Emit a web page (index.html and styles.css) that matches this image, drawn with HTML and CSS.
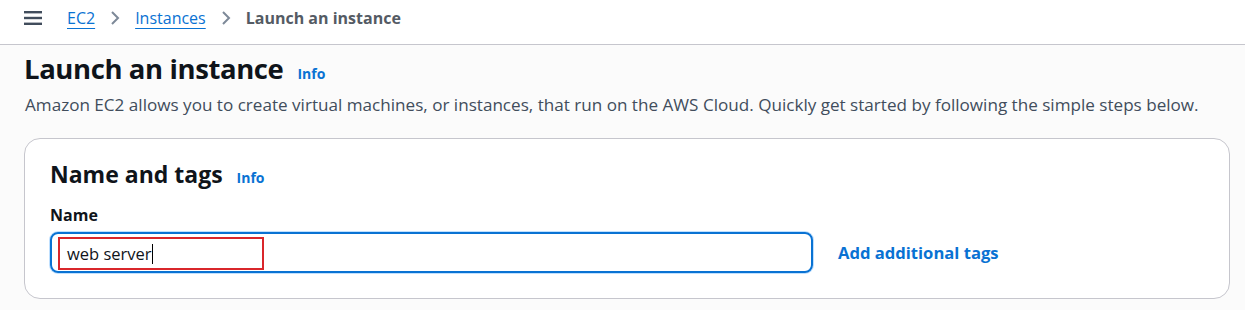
FILE: index.html
```html
<!DOCTYPE html>
<html>
<head>
<meta charset="utf-8">
<link rel="stylesheet" href="styles.css">
</head>
<body>
<header class="topbar">
  <svg class="menu" width="18" height="14" viewBox="0 0 18 14"><rect x="0" y="0" width="18" height="2.4" fill="#414d5c"/><rect x="0" y="5.8" width="18" height="2.4" fill="#414d5c"/><rect x="0" y="11.6" width="18" height="2.4" fill="#414d5c"/></svg>
  <nav class="crumbs">
    <a class="crumb-link">EC2</a>
    <svg class="chev" width="10" height="16" viewBox="0 0 10 16"><path d="M2 2 L8 8 L2 14" fill="none" stroke="#7d8998" stroke-width="2"/></svg>
    <a class="crumb-link">Instances</a>
    <svg class="chev" width="10" height="16" viewBox="0 0 10 16"><path d="M2 2 L8 8 L2 14" fill="none" stroke="#7d8998" stroke-width="2"/></svg>
    <span class="crumb-current">Launch an instance</span>
  </nav>
</header>
<main class="page">
  <div class="title-row">
    <h1 class="title">Launch an instance</h1>
    <a class="info">Info</a>
  </div>
  <p class="desc">Amazon EC2 allows you to create virtual machines, or instances, that run on the AWS Cloud. Quickly get started by following the simple steps below.</p>
  <section class="card">
    <div class="card-head">
      <h2 class="card-title">Name and tags</h2>
      <a class="info">Info</a>
    </div>
    <label class="label">Name</label>
    <div class="field-row">
      <div class="input">
        <div class="highlight"><span class="value">web server</span><span class="caret"></span></div>
      </div>
      <a class="add-tags">Add additional tags</a>
    </div>
  </section>
</main>
</body>
</html>
```
FILE: styles.css
```css
* { box-sizing: border-box; }
html, body { margin: 0; padding: 0; }
body {
  width: 1245px;
  height: 310px;
  overflow: hidden;
  background: #fbfbfb;
  font-family: "Open Sans", "Noto Sans", sans-serif;
  color: #16191f;
}
.topbar {
  height: 45px;
  background: #ffffff;
  border-bottom: 1px solid #c6c6cd;
  display: flex;
  align-items: center;
  padding: 0 0 8px 24px;
}
.menu { display: block; margin-right: 25px; }
.crumbs { display: flex; align-items: center; gap: 0; font-size: 16px; }
.crumb-link {
  color: #0972d3;
  text-decoration: underline;
  text-underline-offset: 4px;
}
.chev { margin: 0 15px 0 15px; display: block; }
.crumb-current { color: #545b64; font-weight: 700; }
.page { padding: 6px 16px 0 24px; }
.title-row { display: flex; align-items: baseline; gap: 14px; }
.title {
  margin: 0;
  font-size: 27.5px;
  font-weight: 700;
  line-height: 36px;
  color: #0f141a;
  letter-spacing: -0.4px;
}
.info { color: #0972d3; font-weight: 700; font-size: 14px; }
.desc {
  margin: 6px 0 0 1px;
  font-size: 17.1px;
  line-height: 24px;
  color: #414d5c;
}
.card {
  margin-top: 21px;
  width: 1206px;
  height: 161px;
  background: #ffffff;
  border: 1px solid #c6c6cd;
  border-radius: 16px;
  padding: 19px 25px 0 25px;
}
.card-head { display: flex; align-items: baseline; gap: 14px; }
.card-title { margin: 0; font-size: 23px; font-weight: 700; line-height: 32px; color: #0f141a; }
.label { display: block; margin-top: 13px; font-size: 16px; font-weight: 700; line-height: 24px; color: #0f141a; }
.field-row { display: flex; align-items: center; margin-top: 5px; }
.input {
  width: 763px;
  height: 41px;
  border: 2px solid #0972d3;
  border-radius: 8px;
  padding: 3px 6px;
  box-shadow: 0 0 0 1px #bfe0ff;
}
.highlight {
  width: 206px;
  height: 33px;
  border: 2px solid #d9262b;
  display: flex;
  align-items: center;
  padding-left: 7px;
}
.value { font-size: 16.5px; color: #0f141a; }
.caret { display: inline-block; width: 1px; height: 20px; background: #000; }
.add-tags { margin-left: 25px; color: #0972d3; font-weight: 700; font-size: 16.6px; }
```
